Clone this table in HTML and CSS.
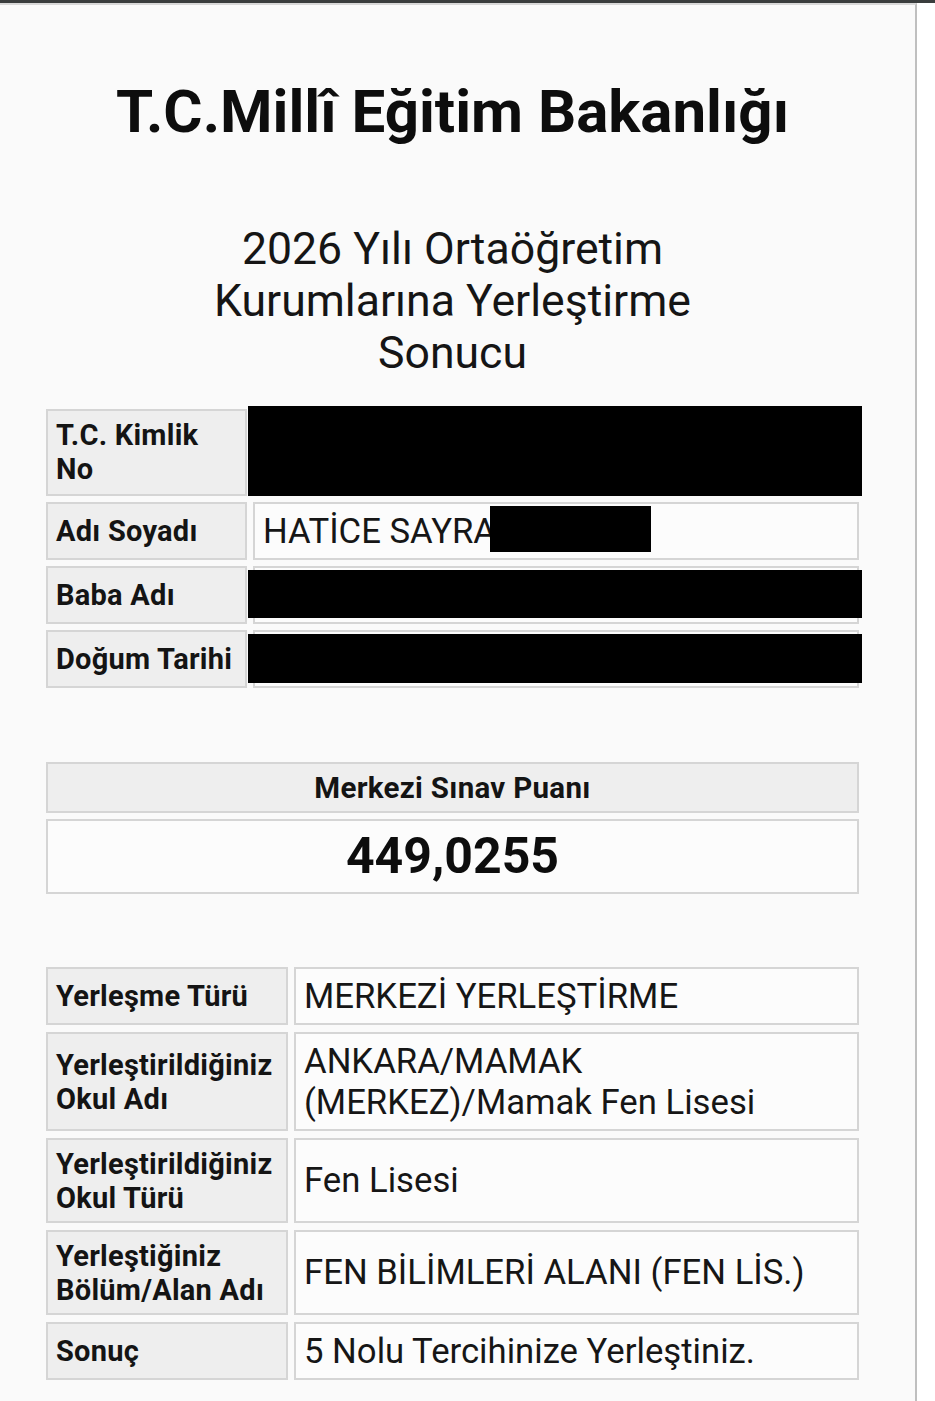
FILE: index.html
```html
<!DOCTYPE html>
<html lang="tr">
<head>
<meta charset="utf-8">
<title>2026 Yılı Ortaöğretim Kurumlarına Yerleştirme Sonucu</title>
<link rel="stylesheet" href="styles.css">
</head>
<body>
<div class="topbar"></div>
<main class="page">
  <h1 class="title">T.C.Millî Eğitim Bakanlığı</h1>
  <h2 class="subtitle">2026 Yılı Ortaöğretim<br>Kurumlarına Yerleştirme<br>Sonucu</h2>

  <div class="grid grid-person">
    <div class="cell label">T.C. Kimlik<br>No</div>
    <div class="cell value"><span class="redact redact-id"></span></div>

    <div class="cell label">Adı Soyadı</div>
    <div class="cell value">HATİCE SAYRA<span class="redact redact-name"></span></div>

    <div class="cell label">Baba Adı</div>
    <div class="cell value">&nbsp;<span class="redact redact-father"></span></div>

    <div class="cell label">Doğum Tarihi</div>
    <div class="cell value">&nbsp;<span class="redact redact-birth"></span></div>
  </div>

  <div class="score">
    <div class="score-head">Merkezi Sınav Puanı</div>
    <div class="score-value">449,0255</div>
  </div>

  <div class="grid grid-result">
    <div class="cell label">Yerleşme Türü</div>
    <div class="cell value">MERKEZİ YERLEŞTİRME</div>

    <div class="cell label">Yerleştirildiğiniz<br>Okul Adı</div>
    <div class="cell value">ANKARA/MAMAK<br>(MERKEZ)/Mamak Fen Lisesi</div>

    <div class="cell label">Yerleştirildiğiniz<br>Okul Türü</div>
    <div class="cell value">Fen Lisesi</div>

    <div class="cell label">Yerleştiğiniz<br>Bölüm/Alan Adı</div>
    <div class="cell value">FEN BİLİMLERİ ALANI (FEN LİS.)</div>

    <div class="cell label">Sonuç</div>
    <div class="cell value">5 Nolu Tercihinize Yerleştiniz.</div>
  </div>
</main>
</body>
</html>
```

FILE: styles.css
```css
* { box-sizing: border-box; }

html, body {
  margin: 0;
  padding: 0;
  background: #ffffff;
}

body {
  font-family: Roboto, "Noto Sans", "Liberation Sans", sans-serif;
  color: #111111;
  height: 1401px;
  overflow: hidden;
}

.topbar {
  height: 3px;
  background: #3a3d3d;
}

.page {
  width: 917px;
  min-height: 1398px;
  background: #fafafa;
  border-top: 2px solid #d8d8d8;
  border-right: 2px solid #bfbfbf;
  padding: 72px 0 0 46px;
}

.title {
  width: 813px;
  margin: 0;
  font-size: 60px;
  line-height: 70px;
  font-weight: 700;
  text-align: center;
  color: #0d0d0d;
}

.subtitle {
  width: 813px;
  margin: 76px 0 0 0;
  font-size: 44.6px;
  line-height: 52px;
  font-weight: 400;
  text-align: center;
  color: #151515;
}

.grid {
  display: grid;
  width: 813px;
  gap: 6px;
}

.grid-person {
  margin-top: 30px;
  grid-template-columns: 201px 1fr;
}

.grid-result {
  margin-top: 73px;
  grid-template-columns: 242px 1fr;
  gap: 7px 6px;
}

.cell {
  display: flex;
  align-items: center;
  border: 2px solid #d5d5d5;
  padding: 6.5px 8px;
}

.label {
  background: #eeeeee;
  font-weight: 700;
  font-size: 29px;
  line-height: 34px;
  letter-spacing: 0.25px;
  color: #141414;
}

.grid-person .label {
  padding-top: 7px;
  padding-bottom: 8px;
}

.value {
  position: relative;
  background: #fcfcfc;
  font-size: 34.7px;
  line-height: 41px;
  color: #161616;
}

.redact {
  position: absolute;
  background: #000000;
}

.redact-id { left: -7px; right: -5px; top: -5px; bottom: -2px; }
.redact-name { left: 235px; top: 2px; width: 161px; height: 46px; }
.redact-father { left: -7px; right: -5px; top: 2px; bottom: 4px; }
.redact-birth { left: -7px; right: -5px; top: 2px; bottom: 3px; }

.score {
  width: 813px;
  margin-top: 74px;
  display: flex;
  flex-direction: column;
  gap: 6px;
}

.score-head {
  background: #eeeeee;
  border: 2px solid #d5d5d5;
  text-align: center;
  font-weight: 700;
  font-size: 29.5px;
  line-height: 34px;
  letter-spacing: 0.3px;
  padding: 6.5px 8px;
  color: #141414;
}

.score-value {
  background: #fcfcfc;
  border: 2px solid #d5d5d5;
  text-align: center;
  font-weight: 700;
  font-size: 50px;
  line-height: 59px;
  padding: 6px 8px;
  color: #0d0d0d;
}
```
